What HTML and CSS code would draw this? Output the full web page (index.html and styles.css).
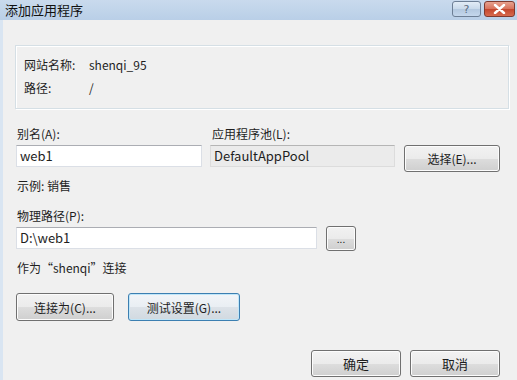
FILE: index.html
```html
<!DOCTYPE html>
<html lang="zh-CN">
<head>
  <meta charset="UTF-8">
  <title>添加应用程序</title>
  <link rel="stylesheet" href="styles.css">
</head>
<body>
  <div class="window">
    <div class="titlebar">
      <span class="title">添加应用程序</span>
      <div class="caption-buttons">
        <button class="cap help">?</button>
        <button class="cap close">
          <svg width="13" height="10" viewBox="0 0 13 10">
            <path d="M2 1 L11 9 M11 1 L2 9" stroke="#fff" stroke-width="2.4" stroke-linecap="round"/>
          </svg>
        </button>
      </div>
    </div>

    <div class="dialog">
      <div class="groupbox">
        <div class="info-row"><span class="info-key">网站名称:</span><span>shenqi_95</span></div>
        <div class="info-row"><span class="info-key">路径:</span><span>/</span></div>
      </div>

      <div class="alias-row">
        <div class="field alias">
          <label>别名(A):</label>
          <div class="textbox">web1</div>
        </div>
        <div class="field pool">
          <label>应用程序池(L):</label>
          <div class="textbox readonly">DefaultAppPool</div>
        </div>
        <button class="btn select-btn">选择(E)...</button>
      </div>

      <div class="hint">示例: 销售</div>

      <label class="path-label">物理路径(P):</label>
      <div class="path-row">
        <div class="textbox path">D:\web1</div>
        <button class="btn browse-btn">...</button>
      </div>

      <div class="hint connect-hint">作为“shenqi”连接</div>

      <div class="connect-row">
        <button class="btn connect-btn">连接为(C)...</button>
        <button class="btn test-btn focused">测试设置(G)...</button>
      </div>

      <div class="footer">
        <button class="btn ok-btn">确定</button>
        <button class="btn ok-btn">取消</button>
      </div>
    </div>
  </div>
</body>
</html>
```

FILE: styles.css
```css
html, body {
  margin: 0;
  padding: 0;
}
body {
  width: 517px;
  height: 380px;
  overflow: hidden;
  background: #f0f0f0;
  font-family: "Noto Sans CJK SC", "Noto Sans", sans-serif;
  font-size: 12px;
  line-height: 16px;
  color: #1e1e1e;
}
.window {
  height: 380px;
  border-left: 3px solid #d9e5f2;
  box-sizing: border-box;
}
.titlebar {
  height: 20px;
  margin-left: -3px;
  padding-left: 5px;
  display: flex;
  align-items: center;
  justify-content: space-between;
  background: linear-gradient(#c9daed, #b9cfe7);
}
.title {
  font-size: 13px;
  color: #111;
}
.caption-buttons {
  display: flex;
  gap: 3px;
  padding-right: 2px;
  align-self: flex-start;
  padding-top: 1px;
}
.cap {
  height: 16px;
  border: 1px solid #6d7f95;
  border-radius: 3px;
  padding: 0;
  display: flex;
  align-items: center;
  justify-content: center;
}
.help {
  width: 29px;
  background: linear-gradient(#e2ecf6 0%, #c8d9ea 50%, #b3c8df 51%, #c4d7ec 100%);
  color: #5a6b80;
  font-family: "DejaVu Sans", sans-serif;
  font-size: 11px;
}
.close {
  width: 31px;
  border-color: #7e3a2f;
  background: linear-gradient(#e7a28f 0%, #d8715a 50%, #c4462c 51%, #d76a4e 100%);
}
.dialog {
  padding: 0 0 0 13px;
}
.groupbox {
  margin-top: 25px;
  margin-left: -1px;
  width: 484px;
  height: 51px;
  border: 1px solid #d5dfe5;
  box-shadow: inset 1px 1px 0 #fff, 1px 1px 0 #fff;
  padding: 11px 0 0 8px;
}
.info-row {
  display: flex;
  height: 16px;
  margin-bottom: 7px;
}
.info-key {
  width: 65px;
}
.alias-row {
  margin-top: 17px;
  display: flex;
  align-items: flex-start;
}
.field label {
  display: block;
  padding-left: 1px;
  margin-bottom: 3px;
}
.field.pool label {
  padding-left: 2px;
}
.alias {
  width: 186px;
}
.pool {
  width: 185px;
  margin-left: 8px;
}
.textbox {
  height: 22px;
  box-sizing: border-box;
  border: 1px solid #dbdfe6;
  border-top-color: #abadb3;
  background: #fff;
  padding: 2px 3px;
  font-size: 13px;
}
.textbox.readonly {
  background: #ebebeb;
  border-color: #dcdcdc;
  border-top-color: #b5b5b5;
}
.btn {
  font-family: inherit;
  font-size: 12px;
  color: #1e1e1e;
  border: 1px solid #707070;
  border-radius: 3px;
  padding: 0;
  box-shadow: inset 0 0 0 1px #fcfcfc;
  background: linear-gradient(#f2f2f2 0%, #ebebeb 50%, #dddddd 51%, #cfcfcf 100%);
}
.btn.focused {
  border-color: #3c7fb1;
  box-shadow: inset 0 0 0 1px #c0e6f9;
  background: linear-gradient(#f2f5f8 0%, #e9eef3 50%, #dce2e8 51%, #d1d9e0 100%);
}
.select-btn {
  width: 96px;
  height: 27px;
  margin-left: 9px;
  margin-top: 19px;
}
.hint {
  margin-top: 6px;
  padding-left: 1px;
}
.path-label {
  display: block;
  margin-top: 14px;
  padding-left: 1px;
}
.path-row {
  margin-top: 3px;
  display: flex;
  align-items: flex-start;
}
.path {
  width: 301px;
}
.browse-btn {
  width: 30px;
  height: 25px;
  margin-left: 9px;
  margin-top: -1px;
  font-size: 10px;
  line-height: 10px;
}
.connect-hint {
  margin-top: 9px;
}
.connect-row {
  margin-top: 17px;
  display: flex;
  gap: 14px;
}
.connect-btn {
  width: 98px;
  height: 28px;
}
.test-btn {
  width: 112px;
  height: 28px;
}
.footer {
  margin-top: 29px;
  padding-left: 295px;
  display: flex;
  gap: 9px;
}
.ok-btn {
  width: 90px;
  height: 27px;
  font-size: 13px;
}
```
